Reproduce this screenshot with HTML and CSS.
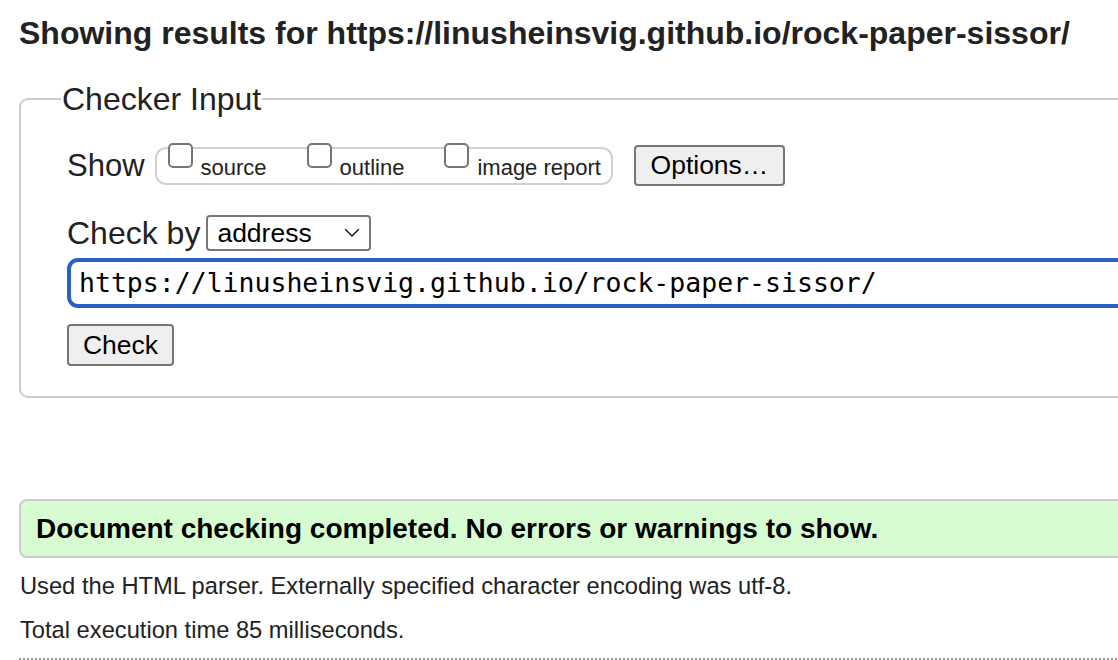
FILE: index.html
```html
<!DOCTYPE html>
<html lang="en">
<head>
<meta charset="utf-8">
<title>Showing results for https://linusheinsvig.github.io/rock-paper-sissor/</title>
<link rel="stylesheet" href="styles.css">
</head>
<body>
<h2 class="title">Showing results for https://linusheinsvig.github.io/rock-paper-sissor/</h2>
<fieldset class="checker">
  <legend class="legend">Checker Input</legend>
  <div class="show-row">
    <span class="row-label">Show</span>
    <span class="options-box">
      <label class="opt"><input type="checkbox" class="cb"><span>source</span></label>
      <label class="opt"><input type="checkbox" class="cb"><span>outline</span></label>
      <label class="opt"><input type="checkbox" class="cb"><span>image report</span></label>
    </span>
    <button class="btn btn-options" type="button">Options…</button>
  </div>
  <div class="by-row">
    <span class="row-label">Check by</span>
    <span class="select">
      <span class="select-text">address</span>
      <svg class="chev" width="16" height="10" viewBox="0 0 16 10"><path d="M1.5 1.5 L8 8 L14.5 1.5" fill="none" stroke="#222" stroke-width="1.6" stroke-linecap="round" stroke-linejoin="round"/></svg>
    </span>
  </div>
  <div class="url-input">https://linusheinsvig.github.io/rock-paper-sissor/</div>
  <button class="btn btn-check" type="button">Check</button>
</fieldset>
<div class="success">Document checking completed. No errors or warnings to show.</div>
<p class="info">Used the HTML parser. Externally specified character encoding was utf-8.</p>
<p class="info info-time">Total execution time 85 milliseconds.</p>
<div class="dots"></div>
</body>
</html>
```
FILE: styles.css
```css
html, body {
  margin: 0;
  padding: 0;
  overflow: hidden;
  background: #fff;
}
body {
  font-family: "Liberation Sans", Arial, sans-serif;
  color: #222;
  padding-left: 19px;
  width: 1200px;
}
.title {
  font-size: 32px;
  font-weight: bold;
  margin: 0;
  padding-top: 15px;
  line-height: 36px;
  color: #222;
  white-space: nowrap;
}
.checker {
  margin: 30px 0 0 0;
  border: 2px solid #cdcdcd;
  border-radius: 9px;
  padding: 0 0 30px 46px;
  width: 1130px;
  box-sizing: border-box;
}
.legend {
  font-size: 32px;
  padding: 0 1px;
  margin-left: -6px;
  line-height: 36px;
  color: #222;
}
.show-row {
  display: flex;
  align-items: center;
  margin-top: 28px;
}
.row-label {
  font-size: 31px;
  line-height: 36px;
  color: #222;
}
.by-row .row-label {
  font-size: 32px;
}
.options-box {
  display: flex;
  align-items: center;
  margin-left: 10px;
  border: 2px solid #d0d0d0;
  border-radius: 11px;
  height: 38px;
  box-sizing: border-box;
  padding: 0 10px 0 11px;
  gap: 40px;
}
.opt {
  display: flex;
  align-items: flex-start;
  font-size: 22px;
  color: #222;
}
.opt span {
  margin-left: 8px;
  margin-top: 5px;
  line-height: 26px;
}
.cb {
  appearance: none;
  -webkit-appearance: none;
  width: 25px;
  height: 25px;
  margin: 0;
  border: 2px solid #767676;
  border-radius: 5px;
  background: #fff;
  box-sizing: border-box;
  margin-top: -7px;
}
.btn {
  font-family: "Liberation Sans", Arial, sans-serif;
  font-size: 26.5px;
  color: #000;
  background: #efefef;
  border: 2px solid #767676;
  border-radius: 4px;
  box-sizing: border-box;
  padding: 0;
}
.btn-options {
  margin-left: 21px;
  width: 151px;
  height: 41px;
}
.by-row {
  display: flex;
  align-items: center;
  margin-top: 29px;
}
.select {
  margin-left: 6px;
  display: flex;
  align-items: center;
  justify-content: space-between;
  width: 165px;
  height: 36px;
  box-sizing: border-box;
  border: 2px solid #777;
  border-radius: 4px;
  padding: 0 9px 0 9px;
  font-size: 26.5px;
  color: #000;
}
.select-text {
  line-height: 30px;
}
.chev {
  margin-top: 0;
}
.url-input {
  margin-top: 7px;
  width: 1100px;
  height: 50px;
  box-sizing: border-box;
  border: 4px solid #2b5fc4;
  border-radius: 11px;
  padding: 0 0 0 8px;
  font-family: "DejaVu Sans Mono", "Liberation Mono", monospace;
  font-size: 26.5px;
  line-height: 42px;
  color: #000;
  white-space: nowrap;
}
.btn-check {
  display: block;
  margin-top: 16px;
  width: 107px;
  height: 42px;
}
.success {
  margin-top: 101px;
  width: 1150px;
  height: 59px;
  box-sizing: border-box;
  background: #d8fcd2;
  border: 2px solid #cccccc;
  border-radius: 8px;
  padding-left: 15px;
  font-size: 28px;
  font-weight: bold;
  line-height: 55px;
  color: #000;
}
.info {
  margin: 14px 0 0 1px;
  font-size: 23.7px;
  line-height: 28px;
  color: #222;
}
.info-time {
  margin-top: 16px;
}
.dots {
  margin-top: 14px;
  border-top: 2px dotted #999;
  width: 1150px;
}
```
